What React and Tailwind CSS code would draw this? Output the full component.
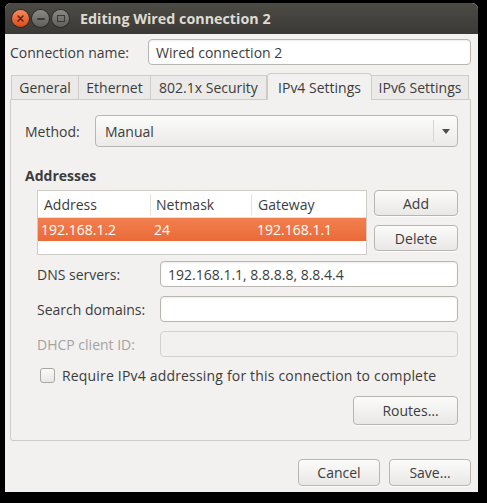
import React from "react";

const font = { fontFamily: '"Open Sans", "Noto Sans", sans-serif' };

function Button({ children, className = "" }) {
  return (
    <div
      className={
        "flex items-center justify-center rounded-[4px] border border-[#b9b6b2] bg-gradient-to-b from-[#fbfbfa] to-[#e9e8e6] text-[14px] text-[#3c3c3c] shadow-[0_1px_0_rgba(255,255,255,0.8)] " +
        className
      }
    >
      {children}
    </div>
  );
}

function Input({ value = "", disabled = false, className = "" }) {
  return (
    <div
      className={
        "flex h-[26px] items-center rounded-[4px] border px-[7px] text-[14px] " +
        (disabled
          ? "border-[#d3d1ce] bg-[#f2f1f0] text-[#9a9a9a] "
          : "border-[#b9b6b2] bg-white text-[#3c3c3c] shadow-[inset_0_1px_2px_rgba(0,0,0,0.08)] ") +
        className
      }
    >
      {value}
    </div>
  );
}

function Tab({ label, w, active }) {
  return (
    <div
      className={
        "flex items-center justify-center border-t border-l border-r border-[#cfccc8] text-[14px] text-[#3c3c3c] " +
        (active
          ? "h-[27px] rounded-t-[4px] bg-[#f2f1f0] relative top-[1px] z-10"
          : "h-[24px] bg-[#ebeae8] -ml-[1px] first:ml-0")
      }
      style={{ width: w }}
    >
      {label}
    </div>
  );
}

export default function App() {
  return (
    <div className="h-[503px] w-[487px] bg-black pl-[5px] pt-[3px]" style={font}>
      <div className="flex h-[489px] w-[473px] flex-col overflow-hidden rounded-t-[6px] bg-[#f2f1f0]">
        {/* Title bar */}
        <div className="flex h-[31px] items-center bg-gradient-to-b from-[#4c4b46] to-[#3a3935] pl-[7px]">
          <div className="flex items-center gap-[3px]">
            <div className="flex h-[17px] w-[17px] items-center justify-center rounded-full bg-gradient-to-b from-[#f58a5b] to-[#dd4814] shadow-[0_0_0_1px_rgba(0,0,0,0.35)]">
              <svg width="9" height="9" viewBox="0 0 9 9">
                <path d="M2 2 L7 7 M7 2 L2 7" stroke="#5a2410" strokeWidth="1.6" strokeLinecap="round" />
              </svg>
            </div>
            <div className="flex h-[17px] w-[17px] items-center justify-center rounded-full bg-gradient-to-b from-[#8a8984] to-[#5f5e59] shadow-[0_0_0_1px_rgba(0,0,0,0.35)]">
              <div className="h-[2px] w-[8px] rounded bg-[#3a3935]" />
            </div>
            <div className="flex h-[17px] w-[17px] items-center justify-center rounded-full bg-gradient-to-b from-[#8a8984] to-[#5f5e59] shadow-[0_0_0_1px_rgba(0,0,0,0.35)]">
              <div className="h-[7px] w-[8px] border border-[#3a3935]" />
            </div>
          </div>
          <div className="ml-[11px] text-[14.3px] font-bold text-[#dfdbd2]">Editing Wired connection 2</div>
        </div>

        {/* Body */}
        <div className="flex flex-1 flex-col pl-[5px] pr-[7px] pt-[5px]">
          <div className="flex items-center">
            <div className="w-[138px] text-[14px] text-[#3c3c3c]">Connection name:</div>
            <Input value="Wired connection 2" className="flex-1" />
          </div>

          {/* Tabs */}
          <div className="mt-[7px] flex items-end pl-[1px]">
            <Tab label="General" w={68} />
            <Tab label="Ethernet" w={73} />
            <Tab label="802.1x Security" w={117} />
            <Tab label="IPv4 Settings" w={105} active />
            <Tab label="IPv6 Settings" w={98} />
          </div>

          {/* Panel */}
          <div className="flex h-[342px] flex-col rounded-b-[3px] border border-[#cfccc8] bg-[#f2f1f0] pl-[14px] pr-[12px] pt-[15px]">
            <div className="flex items-center">
              <div className="w-[70px] text-[14px] text-[#3c3c3c]">Method:</div>
              <div className="flex h-[32px] flex-1 items-center rounded-[4px] border border-[#b9b6b2] bg-gradient-to-b from-[#fbfbfa] to-[#ebeae8] pl-[9px] text-[14px] text-[#3c3c3c]">
                <div className="flex-1">Manual</div>
                <div className="h-[22px] w-px bg-[#d8d6d3]" />
                <div className="flex w-[23px] items-center justify-center">
                  <svg width="8" height="5" viewBox="0 0 8 5">
                    <path d="M0 0 L8 0 L4 5 Z" fill="#4c4c4c" />
                  </svg>
                </div>
              </div>
            </div>

            <div className="mt-[18px] text-[14px] font-bold text-[#3c3c3c]">Addresses</div>

            <div className="mt-[4px] flex pl-[12px]">
              <div className="h-[65px] w-[330px] border border-[#cfccc8] bg-white">
                <div className="flex h-[27px] items-center border-b border-[#e4e2df] text-[14px] text-[#3c3c3c]">
                  <div className="w-[113px] border-r border-[#e4e2df] pl-[6px]">Address</div>
                  <div className="w-[101px] border-r border-[#e4e2df] pl-[5px]">Netmask</div>
                  <div className="flex-1 pl-[6px]">Gateway</div>
                </div>
                <div className="flex h-[23px] items-center bg-gradient-to-b from-[#f2804f] to-[#ea6a38] text-[14px] text-white">
                  <div className="w-[113px] pl-[3px]">192.168.1.2</div>
                  <div className="w-[101px] pl-[3px]">24</div>
                  <div className="flex-1 pl-[5px]">192.168.1.1</div>
                </div>
              </div>
              <div className="ml-[7px] flex flex-1 flex-col gap-[9px]">
                <Button className="h-[26px]">Add</Button>
                <Button className="h-[26px]">Delete</Button>
              </div>
            </div>

            <div className="mt-[6px] flex flex-col gap-[9px] pl-[12px]">
              <div className="flex items-center">
                <div className="w-[123px] text-[14px] text-[#3c3c3c]">DNS servers:</div>
                <Input value="192.168.1.1, 8.8.8.8, 8.8.4.4" className="flex-1" />
              </div>
              <div className="flex items-center">
                <div className="w-[123px] text-[14px] text-[#3c3c3c]">Search domains:</div>
                <Input className="flex-1" />
              </div>
              <div className="flex items-center">
                <div className="w-[123px] text-[14px] text-[#a3a3a3]">DHCP client ID:</div>
                <Input disabled className="flex-1" />
              </div>
            </div>

            <div className="mt-[8px] flex items-center pl-[15px]">
              <div className="h-[15px] w-[15px] rounded-[3px] border border-[#a9a6a2] bg-gradient-to-b from-[#fafafa] to-[#e8e7e5]" />
              <div className="ml-[7px] text-[14px] tracking-[0.18px] text-[#3c3c3c]">Require IPv4 addressing for this connection to complete</div>
            </div>

            <div className="mt-[10px] flex justify-end">
              <Button className="h-[29px] w-[105px] pl-[10px]">Routes…</Button>
            </div>
          </div>

          <div className="mt-[18px] flex justify-end gap-[9px]">
            <Button className="h-[27px] w-[82px]">Cancel</Button>
            <Button className="h-[27px] w-[82px]">Save…</Button>
          </div>
        </div>
      </div>
    </div>
  );
}
